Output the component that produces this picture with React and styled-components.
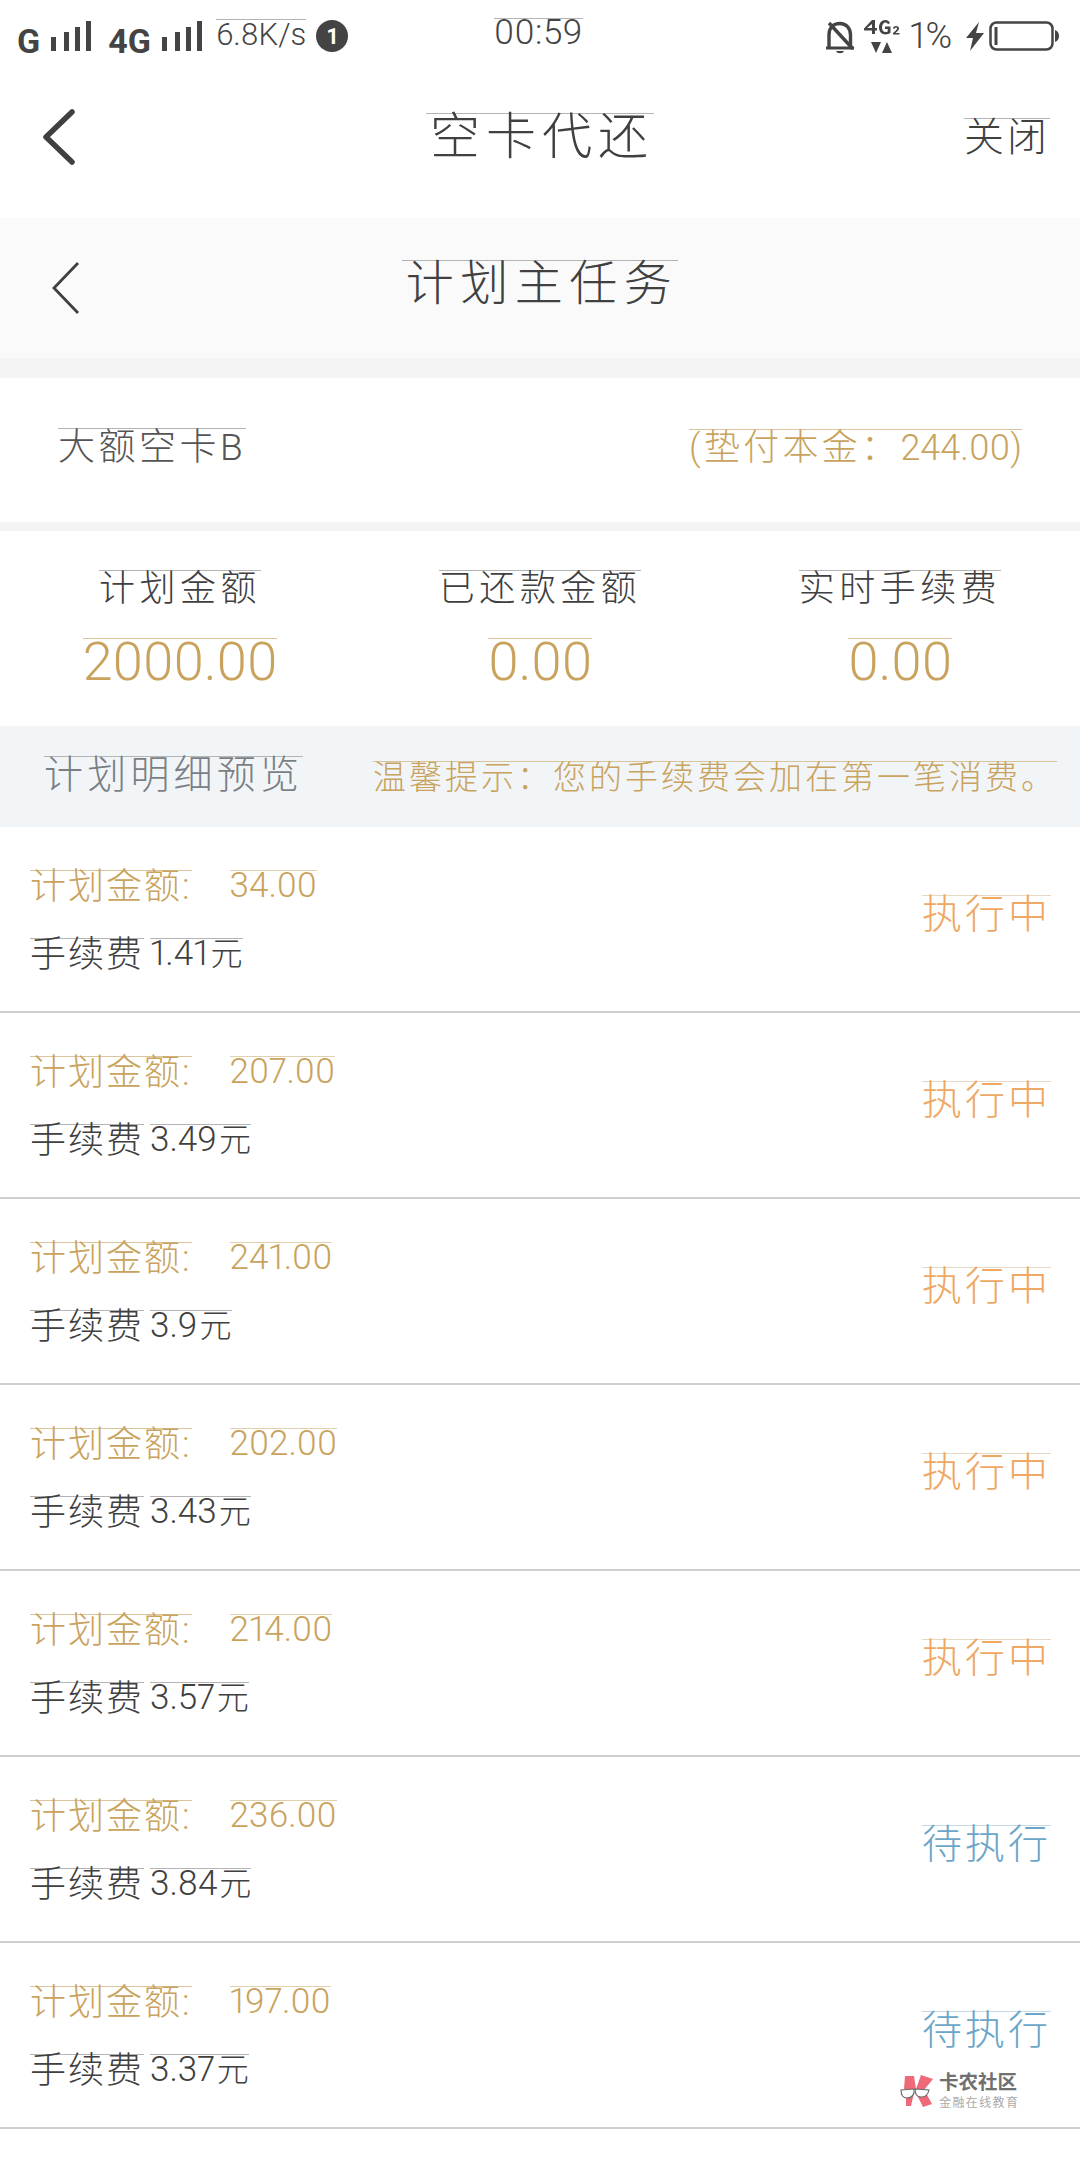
import React from 'react';
import styled, { createGlobalStyle, css } from 'styled-components';

const GlobalStyle = createGlobalStyle`
  html, body {
    margin: 0;
    padding: 0;
    background: #fff;
    font-family: Roboto, "Noto Sans CJK SC", sans-serif;
    font-variant-numeric: proportional-nums;
  }
`;

const GOLD = '#c9a35e';
const GOLD_LINE = '#d9c49c';
const INK = '#404040';

// the thin rule that sits on top of every piece of text in the screenshot
const hairline = css`
  display: inline-block;
  line-height: 0.94;
  white-space: nowrap;
  font-weight: 300;
  border-top: 1px solid #b4b4b4;
`;

const Page = styled.div`
  position: relative;
  width: 1080px;
  height: 2160px;
  overflow: hidden;
  background: #fff;
`;

const StatusBar = styled.div`
  height: 70px;
  padding: 18px 20px 0 17px;
  box-sizing: border-box;
  display: grid;
  grid-template-columns: 1fr auto 1fr;
  align-items: start;
  color: #444;
`;

const StatusLeft = styled.div`
  display: flex;
  align-items: flex-start;
`;

const StatusRight = styled.div`
  display: flex;
  justify-content: flex-end;
  align-items: flex-start;
`;

const NetLabel = styled.span`
  font-size: 34px;
  font-weight: 700;
  line-height: 1;
  margin-top: 6px;
  margin-left: ${p => p.$left || 0}px;
`;

const Speed = styled.span`
  ${hairline}
  font-size: 31px;
  margin: 1px 0 0 13px;
  height: 32px;
`;

const Badge = styled.span`
  width: 32px;
  height: 32px;
  margin: 2px 0 0 10px;
  border-radius: 50%;
  background: #444;
  color: #fff;
  font-size: 22px;
  font-weight: 700;
  display: flex;
  align-items: center;
  justify-content: center;
`;

const Clock = styled.span`
  ${hairline}
  font-size: 35px;
  letter-spacing: 0.5px;
  line-height: 0.8;
`;

const Percent = styled.span`
  font-size: 36px;
  font-weight: 300;
  line-height: 1;
  margin: 0 0 0 9px;
`;

const Header = styled.div`
  height: 148px;
  padding-bottom: 14px;
  box-sizing: border-box;
  display: grid;
  grid-template-columns: 1fr auto 1fr;
  align-items: center;
`;

const HeaderTitle = styled.div`
  ${hairline}
  font-size: 50px;
  letter-spacing: 6px;
  color: ${INK};
  padding-left: 4px;
`;

const CloseLabel = styled.div`
  ${hairline}
  justify-self: end;
  margin-right: 30px;
  font-size: 40px;
  letter-spacing: 3px;
  color: ${INK};
`;

const BackCell = styled.div`
  display: flex;
  padding-left: ${p => p.$left}px;
`;

const SubHeader = styled(Header)`
  height: 140px;
  padding-bottom: 0;
  background: #fafafa;
`;

const SubTitle = styled(HeaderTitle)`
  font-size: 48px;
  letter-spacing: 6.500px;
  margin-top: -10px;
`;

const Gap = styled.div`
  height: ${p => p.$h}px;
  background: #f4f4f4;
`;

const CardRow = styled.div`
  height: 144px;
  padding: 0 58px 6px 58px;
  box-sizing: border-box;
  display: flex;
  justify-content: space-between;
  align-items: center;
`;

const CardName = styled.span`
  ${hairline}
  line-height: 1;
  font-size: 37px;
  letter-spacing: 3.500px;
  color: #555;
`;

const Principal = styled.span`
  ${hairline}
  line-height: 1;
  font-size: 36px;
  letter-spacing: 3.300px;
  color: ${GOLD};
  border-top-color: ${GOLD_LINE};
`;

const PrincipalSum = styled.span`
  letter-spacing: 0;
`;

const Stats = styled.div`
  height: 195px;
  padding-top: 39px;
  box-sizing: border-box;
  display: grid;
  grid-template-columns: repeat(3, 1fr);
`;

const StatCell = styled.div`
  display: flex;
  flex-direction: column;
  align-items: center;
`;

const StatLabel = styled.span`
  ${hairline}
  line-height: 1;
  font-size: 36px;
  letter-spacing: 4.500px;
  color: ${INK};
`;

const StatValue = styled.span`
  ${hairline}
  margin-top: 31px;
  font-size: 54px;
  line-height: 0.84;
  letter-spacing: -0.500px;
  color: ${GOLD};
  border-top-color: ${GOLD_LINE};
`;

const Banner = styled.div`
  height: 101px;
  padding: 0 23px 4px 44px;
  box-sizing: border-box;
  background: #f2f5f8;
  display: flex;
  justify-content: space-between;
  align-items: center;
`;

const BannerTitle = styled.span`
  ${hairline}
  font-size: 39px;
  letter-spacing: 4.200px;
  color: #7a7f85;
`;

const BannerTip = styled.span`
  ${hairline}
  font-size: 33px;
  letter-spacing: 3px;
  color: ${GOLD};
  border-top-color: ${GOLD_LINE};
  margin-top: 6px;
`;

const Row = styled.div`
  height: 186px;
  padding: 43px 29px 0 30px;
  box-sizing: border-box;
  border-bottom: 2px solid #cfcfcf;
  display: flex;
  justify-content: space-between;
  align-items: flex-start;
`;

const RowText = styled.div`
  display: flex;
  flex-direction: column;
  align-items: flex-start;
  gap: 33px;
`;

const RowLine = styled.div`
  display: flex;
  align-items: flex-start;
`;

const AmountLabel = styled.span`
  ${hairline}
  margin-right: 38px;
  font-size: 36px;
  letter-spacing: 2px;
  color: ${GOLD};
  border-top-color: ${GOLD_LINE};
`;

const AmountValue = styled.span`
  ${hairline}
  font-size: 35px;
  line-height: 0.86;
  color: ${GOLD};
  border-top-color: #e0d0ae;
`;

const FeeLabel = styled.span`
  ${hairline}
  font-size: 36px;
  letter-spacing: 2px;
  color: ${INK};
`;

const FeeValue = styled.span`
  ${hairline}
  margin-left: 6px;
  font-size: 35px;
  line-height: 0.86;
  color: ${INK};
`;

const FeeUnit = styled.span`
  font-size: 32px;
  margin-left: 2px;
`;

const RowStatus = styled.span`
  ${hairline}
  margin-top: 25px;
  font-size: 40px;
  letter-spacing: 3px;
  color: ${p => (p.$pending ? '#6ba5c8' : '#eea864')};
  border-top-color: ${p => (p.$pending ? '#c3d9e6' : '#e6d8c4')};
`;

const Watermark = styled.div`
  position: absolute;
  left: 900px;
  top: 2073px;
  display: flex;
  align-items: center;
  gap: 5px;
`;

const WatermarkText = styled.div`
  display: flex;
  flex-direction: column;
  gap: 4px;
`;

const BrandName = styled.span`
  font-size: 19.500px;
  font-weight: 700;
  line-height: 1;
  color: #707070;
`;

const BrandSlogan = styled.span`
  font-size: 12px;
  line-height: 1;
  letter-spacing: 1.400px;
  color: #aaa;
`;

const Bars = () => (
  <svg width="41" height="31" viewBox="0 0 41 31" style={{ marginLeft: 11, marginTop: 3 }} fill="#444">
    <rect x="0" y="16" width="5" height="14" />
    <rect x="13" y="11" width="5" height="19" />
    <rect x="24" y="6" width="5" height="24" />
    <rect x="35" y="0" width="5" height="30" />
  </svg>
);

const BellOff = () => (
  <svg width="30" height="36" viewBox="0 0 30 36" style={{ marginTop: 2 }} fill="none" stroke="#444" strokeWidth="3.400">
    <path d="M4 27V15C4 8 8 3.500 15 3.500C21 3.500 25.500 8 25.500 15V27" />
    <path d="M1 28H29" strokeWidth="3" />
    <path d="M4 3L28 29" />
    <path d="M11 31C12 34 18 34 19 31Z" fill="#444" stroke="none" />
  </svg>
);

const Net4G = () => (
  <svg width="37" height="36" viewBox="0 0 37 36" style={{ marginLeft: 9, marginTop: 0 }} fill="#444">
    <path d="M8 2H11V10H13V12.500H11V16H8V12.500H0V10.500L8 2ZM8 6L3 10H8Z" />
    <path d="M26 5C25 3 23.500 2 21.500 2C17.500 2 15 5 15 9.500C15 13.500 17.500 16.500 21.500 16.500C23.500 16.500 25 16 26.500 14.800V8.500H21V11H23.700V13.500C23 13.900 22.300 14 21.500 14C19.500 14 18 12.500 18 9.500C18 6.500 19.500 4.500 21.500 4.500C22.500 4.500 23.500 5 24 6.200Z" />
    <path d="M29 10.500C29 9 30 8 32 8C34 8 35 9 35 10.500C35 12 33 13.500 31.500 15H35.500V16.500H29V15C31 13 33 11.800 33 10.500C33 9.800 32.800 9.500 32 9.500C31.300 9.500 31 10 31 10.800Z" />
    <path d="M7 24H17L12 35Z" />
    <path d="M23 24L28 35H18Z" />
  </svg>
);

const Bolt = () => (
  <svg width="18" height="29" viewBox="0 0 18 29" style={{ marginLeft: 14, marginTop: 4 }} fill="#444">
    <path d="M13 0L0 16H7L4 29L18 11H10Z" />
  </svg>
);

const Battery = () => (
  <svg width="71" height="31" viewBox="0 0 71 31" style={{ marginLeft: 5, marginTop: 3 }} fill="none">
    <rect x="1.500" y="1.500" width="62" height="27" rx="6" stroke="#444" strokeWidth="2.500" />
    <rect x="5.500" y="6" width="3" height="18" fill="#444" />
    <path d="M66 9C69 10 70 12.500 70 15C70 17.500 69 20 66 21Z" fill="#444" />
  </svg>
);

const BackArrow = ({ width, height, strokeWidth, round, points }) => (
  <svg width={width} height={height} viewBox={`0 0 ${width} ${height}`} fill="none">
    <polyline
      points={points}
      stroke={INK}
      strokeWidth={strokeWidth}
      strokeLinecap={round ? 'round' : 'butt'}
      strokeLinejoin={round ? 'round' : 'miter'}
    />
  </svg>
);

const RibbonLogo = () => (
  <svg width="34" height="32" viewBox="0 0 34 32">
    <path d="M5 1H14L16 14L4 14Z" fill="#ee6a78" />
    <path d="M21 0L33 4L24 15L16 14Z" fill="#ee6a78" />
    <path d="M15 16L25 16L32 29L23 32Z" fill="#ee6a78" />
    <path d="M6 20L14 18L11 31L6 31Z" fill="#ee6a78" />
    <path d="M1 15L14 14C15 19 12 23 7 23C3 23 1 20 1 15Z" fill="#fff" stroke="#666" strokeWidth="1.100" />
    <path d="M15 14L29 15C28 20 25 22 21 22C17 22 15 19 15 14Z" fill="#fff" stroke="#666" strokeWidth="1.100" />
  </svg>
);

const stats = [
  { label: '计划金额', value: '2000.00' },
  { label: '已还款金额', value: '0.00' },
  { label: '实时手续费', value: '0.00' },
];

const rows = [
  { amount: '34.00', fee: '1.41' },
  { amount: '207.00', fee: '3.49' },
  { amount: '241.00', fee: '3.9' },
  { amount: '202.00', fee: '3.43' },
  { amount: '214.00', fee: '3.57' },
  { amount: '236.00', fee: '3.84', pending: true },
  { amount: '197.00', fee: '3.37', pending: true },
];

const App = () => {
  return (
    <Page>
      <GlobalStyle />
      <StatusBar>
        <StatusLeft>
          <NetLabel>G</NetLabel>
          <Bars />
          <NetLabel $left={16}>4G</NetLabel>
          <Bars />
          <Speed>6.8K/s</Speed>
          <Badge>1</Badge>
        </StatusLeft>
        <Clock>00:59</Clock>
        <StatusRight>
          <BellOff />
          <Net4G />
          <Percent>1%</Percent>
          <Bolt />
          <Battery />
        </StatusRight>
      </StatusBar>

      <Header>
        <BackCell $left={42}>
          <BackArrow width={34} height={56} strokeWidth={5.5} round points="30,3 4,28 30,53" />
        </BackCell>
        <HeaderTitle>空卡代还</HeaderTitle>
        <CloseLabel>关闭</CloseLabel>
      </Header>

      <SubHeader>
        <BackCell $left={51}>
          <BackArrow width={30} height={54} strokeWidth={2.8} points="27,2 3,27 27,52" />
        </BackCell>
        <SubTitle>计划主任务</SubTitle>
      </SubHeader>
      <Gap $h={20} />

      <CardRow>
        <CardName>大额空卡B</CardName>
        <Principal>(垫付本金：<PrincipalSum>244.00)</PrincipalSum></Principal>
      </CardRow>
      <Gap $h={9} />

      <Stats>
        {stats.map(s => (
          <StatCell key={s.label}>
            <StatLabel>{s.label}</StatLabel>
            <StatValue>{s.value}</StatValue>
          </StatCell>
        ))}
      </Stats>

      <Banner>
        <BannerTitle>计划明细预览</BannerTitle>
        <BannerTip>温馨提示：您的手续费会加在第一笔消费。</BannerTip>
      </Banner>

      {rows.map(r => (
        <Row key={r.amount}>
          <RowText>
            <RowLine>
              <AmountLabel>计划金额:</AmountLabel>
              <AmountValue>{r.amount}</AmountValue>
            </RowLine>
            <RowLine>
              <FeeLabel>手续费</FeeLabel>
              <FeeValue>
                {r.fee}
                <FeeUnit>元</FeeUnit>
              </FeeValue>
            </RowLine>
          </RowText>
          <RowStatus $pending={r.pending}>{r.pending ? '待执行' : '执行中'}</RowStatus>
        </Row>
      ))}

      <Watermark>
        <RibbonLogo />
        <WatermarkText>
          <BrandName>卡农社区</BrandName>
          <BrandSlogan>金融在线教育</BrandSlogan>
        </WatermarkText>
      </Watermark>
    </Page>
  );
};

export default App;
